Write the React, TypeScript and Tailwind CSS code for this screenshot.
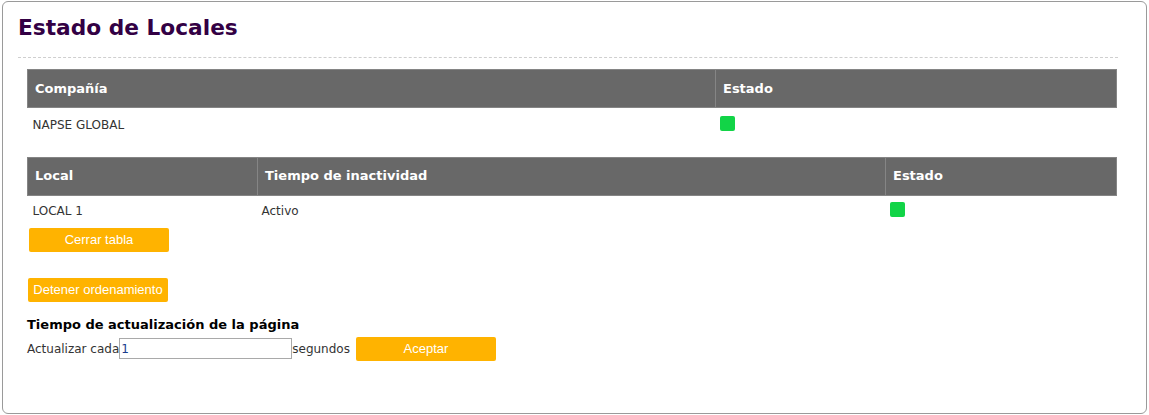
const verdana = "font-['Verdana','DejaVu_Sans',sans-serif]";

const StatusDot = () => (
  <span className="inline-block h-[15px] w-[15px] rounded-[2px] bg-[#12d447]" />
);

const HeaderCell = ({ children, className = "" }: { children: React.ReactNode; className?: string }) => (
  <th
    className={`h-[38px] border border-[#858585] bg-[#686868] px-[7px] text-left align-middle text-[13px] font-bold text-white ${className}`}
  >
    {children}
  </th>
);

const OrangeButton = ({ children, className = "" }: { children: React.ReactNode; className?: string }) => (
  <button
    type="button"
    className={`h-6 w-[140px] rounded-[2px] bg-[#ffb300] font-['Liberation_Sans',Arial,sans-serif] text-[13px] text-white ${className}`}
  >
    {children}
  </button>
);

const App = () => {
  return (
    <div className={`h-[415px] w-[1149px] bg-white px-[2px] pt-[1px] ${verdana} text-[#333]`}>
      <div className="h-[413px] rounded-[6px] border border-[#9a9a9a] px-[15px]">
        <h1 className="pt-[12px] text-[21.7px] font-bold leading-[28px] text-[#330044]">
          Estado de Locales
        </h1>
        <div className="mt-[15px] w-[1100px] border-t border-dashed border-[#cfcfcf]" />

        <div className="pl-[9px] pt-[11px]">
          <table className="w-[1090px] border-collapse">
            <thead>
              <tr>
                <HeaderCell className="w-[688px]">Compañía</HeaderCell>
                <HeaderCell>Estado</HeaderCell>
              </tr>
            </thead>
            <tbody>
              <tr>
                <td className="h-[34px] px-[5px] text-[12px]">NAPSE GLOBAL</td>
                <td className="h-[34px] px-[4px] pt-[2px]">
                  <StatusDot />
                </td>
              </tr>
            </tbody>
          </table>

          <table className="mt-[15px] w-[1090px] border-collapse">
            <thead>
              <tr>
                <HeaderCell className="w-[230px]">Local</HeaderCell>
                <HeaderCell className="w-[628px]">Tiempo de inactividad</HeaderCell>
                <HeaderCell>Estado</HeaderCell>
              </tr>
            </thead>
            <tbody>
              <tr>
                <td className="h-[32px] px-[5px] text-[12px]">LOCAL 1</td>
                <td className="h-[32px] px-[4px] text-[12px]">Activo</td>
                <td className="h-[32px] px-[4px] pt-[2px]">
                  <StatusDot />
                </td>
              </tr>
            </tbody>
          </table>

          <OrangeButton className="ml-[2px] mt-[1px] block">Cerrar tabla</OrangeButton>
          <OrangeButton className="ml-[1px] mt-[26px] block">Detener ordenamiento</OrangeButton>

          <div className="mt-[13px] text-[13px] font-bold text-black">
            Tiempo de actualización de la página
          </div>
          <div className="mt-[2px] flex items-center text-[12px]">
            <span>Actualizar cada</span>
            <input
              type="text"
              defaultValue="1"
              className="h-[21px] w-[173px] border border-[#a9a9a9] px-[1px] text-[12px] text-[#1a3c8c] outline-none"
            />
            <span>segundos</span>
            <OrangeButton className="ml-[6px]">Aceptar</OrangeButton>
          </div>
        </div>
      </div>
    </div>
  );
};

export default App;
